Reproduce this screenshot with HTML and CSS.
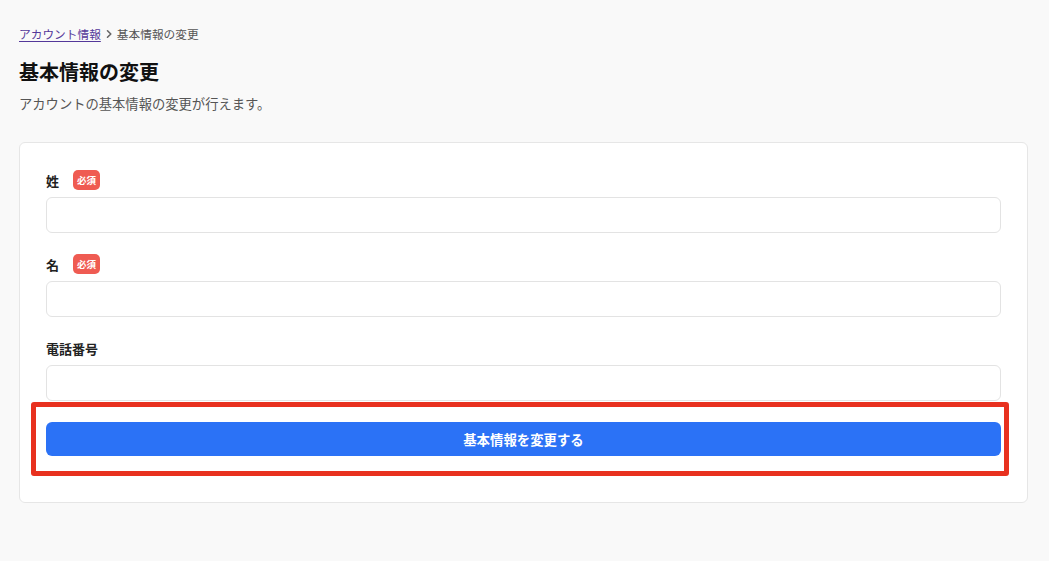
FILE: index.html
```html
<!DOCTYPE html>
<html lang="ja">
<head>
<meta charset="utf-8">
<title>基本情報の変更</title>
<link rel="stylesheet" href="styles.css">
</head>
<body>
<main class="page">
  <nav class="breadcrumb">
    <a class="crumb-link" href="#">アカウント情報</a>
    <svg class="crumb-sep" width="10" height="10" viewBox="0 0 10 10"><path d="M3.5 1.8 L6.8 5 L3.5 8.2" fill="none" stroke="#666" stroke-width="1.6" stroke-linecap="round" stroke-linejoin="round"/></svg>
    <span class="crumb-current">基本情報の変更</span>
  </nav>
  <h1 class="title">基本情報の変更</h1>
  <p class="desc">アカウントの基本情報の変更が行えます。</p>
  <form class="card">
    <div class="field">
      <div class="label-row"><span class="label">姓</span><span class="badge">必須</span></div>
      <input class="input" type="text">
    </div>
    <div class="field">
      <div class="label-row"><span class="label">名</span><span class="badge">必須</span></div>
      <input class="input" type="text">
    </div>
    <div class="field">
      <div class="label-row"><span class="label">電話番号</span></div>
      <input class="input" type="text">
    </div>
    <div class="submit-wrap">
      <button class="submit" type="button">基本情報を変更する</button>
    </div>
  </form>
</main>
</body>
</html>
```
FILE: styles.css
```css
* { box-sizing: border-box; }
html, body { margin: 0; padding: 0; }
body {
  background: #f9f9f9;
  font-family: "Noto Sans CJK JP", "Noto Sans", sans-serif;
  color: #111;
}
.page {
  padding: 25px 21px 0 19px;
}
.breadcrumb {
  display: flex;
  align-items: center;
  gap: 3px;
  height: 18px;
  font-size: 11.7px;
  line-height: 18px;
}
.crumb-link {
  color: #54389a;
  text-decoration: underline;
  text-underline-offset: 2px;
}
.crumb-sep { display: block; }
.crumb-current { color: #555; }
.title {
  margin: 15px 0 0;
  font-size: 20px;
  line-height: 28px;
  font-weight: 700;
  color: #111;
}
.desc {
  margin: 8px 0 0;
  font-size: 13.3px;
  line-height: 20px;
  color: #555;
}
.card {
  margin: 28px 0 0;
  background: #fff;
  border: 1px solid #e6e6e6;
  border-radius: 6px;
  padding: 27px 26px 46px;
  display: flex;
  flex-direction: column;
  gap: 21px;
}
.field {
  display: flex;
  flex-direction: column;
  gap: 7px;
}
.label-row {
  display: flex;
  align-items: center;
  gap: 14px;
  height: 20px;
}
.label {
  font-size: 13px;
  font-weight: 700;
  color: #222;
}
.badge {
  background: #ef5b52;
  color: #fff;
  font-size: 9.5px;
  font-weight: 700;
  line-height: 20px;
  height: 20px;
  padding: 0 4px;
  border-radius: 5px;
  width: 27px;
  text-align: center;
}
.input {
  display: block;
  width: 100%;
  height: 36px;
  border: 1.5px solid #e3e3e3;
  border-radius: 6px;
  background: #fff;
  font: inherit;
}
.submit-wrap {
  position: relative;
}
.submit-wrap::after {
  content: "";
  position: absolute;
  left: -15px;
  right: -8px;
  top: -20px;
  bottom: -20px;
  border: 5px solid #e8311f;
  border-radius: 3px;
  pointer-events: none;
}
.submit {
  display: block;
  width: 100%;
  height: 34px;
  border: none;
  border-radius: 6px;
  background: #2b72f6;
  color: #fff;
  font-family: inherit;
  font-size: 13.4px;
  font-weight: 700;
}
```
